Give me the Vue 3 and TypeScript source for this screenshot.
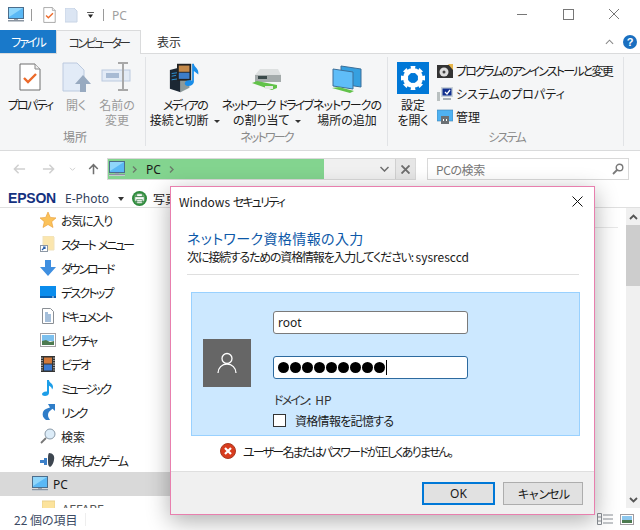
<script setup lang="ts">
interface NavItem {
  label: string;
  icon: string;
  tracking: number;
}

// kana runs narrower on the original font, so each label carries its own tracking
const navItems: NavItem[] = [
  { label: 'お気に入り', icon: 'i-star', tracking: -1.2 },
  { label: 'スタート メニュー', icon: 'i-startmenu', tracking: -2.2 },
  { label: 'ダウンロード', icon: 'i-download', tracking: -2.2 },
  { label: 'デスクトップ', icon: 'i-desktop', tracking: -1.8 },
  { label: 'ドキュメント', icon: 'i-document', tracking: -1.8 },
  { label: 'ピクチャ', icon: 'i-picture', tracking: -1.8 },
  { label: 'ビデオ', icon: 'i-video', tracking: -1.5 },
  { label: 'ミュージック', icon: 'i-music', tracking: -2.5 },
  { label: 'リンク', icon: 'i-link', tracking: -2 },
  { label: '検索', icon: 'i-search', tracking: 0 },
  { label: '保存したゲーム', icon: 'i-games', tracking: -2 },
];

const passwordDots = Array.from({ length: 9 }, (_, i) => i);
</script>

<template>
  <div class="explorer">
    <svg class="defs" aria-hidden="true">
      <symbol id="i-monitor" viewBox="0 0 16 16">
        <rect x="0.5" y="0.5" width="15" height="11" fill="#5ab8f5" stroke="#4b6d8c" />
        <path d="M1 1h14L1 10z" fill="#8fd6fb" />
        <rect x="0" y="13" width="16" height="1" fill="#8a94a0" />
        <rect x="0" y="14" width="16" height="1" fill="#c4cad0" />
        <rect x="6" y="12" width="4" height="1" fill="#9aa3ad" />
      </symbol>
      <symbol id="i-check" viewBox="0 0 22 28">
        <path d="M1 1h15l5 5v21H1z" fill="#fff" stroke="#6e6e6e" />
        <path d="M16 1v5h5" fill="#eee" stroke="#8a8a8a" />
        <path d="M5 15l4 4 8-8" fill="none" stroke="#ec6a2a" stroke-width="2.4" />
      </symbol>
      <symbol id="i-star" viewBox="0 0 16 16">
        <path d="M8 0l2.3 5.4 5.7.5-4.3 3.8 1.3 5.8L8 12.5l-5 3 1.3-5.8L0 5.9l5.7-.5z" fill="#fbc25a" stroke="#e89a32" stroke-width=".6" />
      </symbol>
      <symbol id="i-startmenu" viewBox="0 0 16 16">
        <path d="M3 0h10l1 1v13H3z" fill="#fbe6ae" stroke="#f0e2bd" />
        <rect x="0.5" y="9.5" width="7" height="6" fill="#fff" stroke="#8d98a5" />
        <path d="M2 14l3-3M3 11h2v2" stroke="#2a5fa8" fill="none" stroke-width="1.2" />
      </symbol>
      <symbol id="i-download" viewBox="0 0 16 16">
        <path d="M5 0h6v7h5l-8 9-8-9h5z" fill="#3f8fe0" />
      </symbol>
      <symbol id="i-desktop" viewBox="0 0 16 16">
        <rect x="0" y="2" width="16" height="12" fill="#0a8cec" />
        <rect x="0" y="12" width="16" height="2" fill="#0a5fb0" />
        <rect x="12" y="12.5" width="2" height="1" fill="#cfe6fa" />
      </symbol>
      <symbol id="i-document" viewBox="0 0 16 16">
        <path d="M2.500.5h8l3 3v12h-11z" fill="#fff" stroke="#8a8f95" />
        <path d="M5 5h3M5 7h6M5 9h6M5 11h6M5 13h6" stroke="#4a7fb5" />
      </symbol>
      <symbol id="i-picture" viewBox="0 0 16 16">
        <rect x="0.5" y="1.500" width="15" height="13" fill="#fff" stroke="#a3a0a4" />
        <rect x="2" y="3" width="12" height="6" fill="#7cc0ee" />
        <path d="M2 13V9l4-1 4 2 4-1v4z" fill="#4d7a50" />
      </symbol>
      <symbol id="i-video" viewBox="0 0 16 16">
        <rect x="1" y="0" width="14" height="16" fill="#333" />
        <path d="M2 1.500v13M14 1.500v13" stroke="#ddd" stroke-width="1.200" stroke-dasharray="1.200 1.200" />
        <rect x="4" y="1.500" width="8" height="6" fill="#d2793a" />
        <rect x="4" y="8.500" width="8" height="6" fill="#3a7ad2" />
      </symbol>
      <symbol id="i-music" viewBox="0 0 16 16">
        <path d="M7 0h2c0 3 4 3 4 7 0 1-.5 2-1 2.500 0-2-2-3.500-3-3.700V13c0 2-2 3-4 3s-3-1-3-2 2-3 5-2.500z" fill="#1d9ee8" />
      </symbol>
      <symbol id="i-link" viewBox="0 0 16 16">
        <path d="M8 0h7v7l-2.500-2.200C10 7 8 8 8 11c0 2 1 3.500 2 5H6c-3-2-4-5-3-8 .8-2 2.500-3.300 7-4.600z" fill="#2f7dc8" />
      </symbol>
      <symbol id="i-search" viewBox="0 0 16 16">
        <circle cx="10" cy="6" r="5" fill="#dcecf8" stroke="#8a9aa8" />
        <path d="M6 10l-5 5" stroke="#777" stroke-width="1.800" />
      </symbol>
      <symbol id="i-games" viewBox="0 0 16 16">
        <path d="M9 1c4 0 6 3 5 7-.5 3-2 6-4 7-2-1-2-3-2-7s0-6 1-7z" fill="#3d4650" />
        <path d="M0 8h4V6h3v7H4v-2H0z" fill="#3d80c8" />
      </symbol>
      <symbol id="i-folder" viewBox="0 0 13 16">
        <path d="M0 1h13v14H0z" fill="#fce39c" stroke="#e8cf8a" />
      </symbol>
    </svg>

    <header class="titlebar">
      <svg class="qa-monitor"><use href="#i-monitor" /></svg>
      <span class="qa-sep"></span>
      <svg class="qa-check"><use href="#i-check" /></svg>
      <svg class="qa-doc" viewBox="0 0 13 15">
        <path d="M0 0h9l3 3v11H0z" fill="#dbe5f3" stroke="#c8d4e5" />
      </svg>
      <svg class="qa-drop" viewBox="0 0 8 7">
        <path d="M0 0h8v1H0zM1 3h6L4 7z" fill="#222" />
      </svg>
      <span class="qa-sep last"></span>
      <span class="title-text">PC</span>
      <div class="win-controls">
        <svg viewBox="0 0 46 30"><path d="M18 14.500h10" stroke="#777" /></svg>
        <svg viewBox="0 0 46 30"><rect x="18.500" y="9.500" width="10" height="10" fill="none" stroke="#777" /></svg>
        <svg viewBox="0 0 46 30"><path d="M18 9l10 10M28 9L18 19" stroke="#777" /></svg>
      </div>
    </header>

    <nav class="tabs">
      <span class="tab file">ファイル</span>
      <span class="tab active">コンピューター</span>
      <span class="tab">表示</span>
      <div class="tabs-right">
        <svg class="collapse" viewBox="0 0 10 6"><path d="M1 5l4-4 4 4" fill="none" stroke="#888" stroke-width="1.200" /></svg>
        <span class="help">?</span>
      </div>
    </nav>

    <section class="ribbon">
      <div class="group g-place">
        <div class="group-body">
          <div class="rb-btn w-props">
            <svg class="rb-icon" viewBox="0 0 32 32"><use href="#i-check" x="5" y="1" width="22" height="28" /></svg>
            <span class="k2">プロパティ</span>
          </div>
          <div class="rb-btn w-open dim">
            <svg class="rb-icon" viewBox="0 0 32 32">
              <path d="M3 1h14l7 7v21H3z" fill="#e2ebf7" stroke="#bccadf" />
              <path d="M23 13l8 9h-5v8h-6v-8h-5z" fill="#98aac0" />
            </svg>
            <span>開く</span>
          </div>
          <div class="rb-btn w-rename dim">
            <svg class="rb-icon" viewBox="0 0 32 32">
              <rect x="1" y="8" width="28" height="11" fill="#e3ebf6" stroke="#bccadf" />
              <rect x="5" y="11" width="13" height="5" fill="#a8bbd4" />
              <path d="M17 1h10M22 1v27M17 28h10" stroke="#a8a8a8" stroke-width="2" fill="none" />
            </svg>
            <span>名前の<br />変更</span>
          </div>
        </div>
        <div class="group-label">場所</div>
      </div>

      <div class="group g-net">
        <div class="group-body">
          <div class="rb-btn w-media">
            <svg class="rb-icon" viewBox="0 0 36 32">
              <path d="M1 7l12-3v28L1 28z" fill="#1c2733" />
              <path d="M13 4l10 3v20l-10 5z" fill="#8c9a9a" />
              <path d="M3 11l7-1M3 14l5-1M3 18l7-1" stroke="#2f9be0" />
              <rect x="9" y="0" width="16" height="19" fill="#222" />
              <rect x="11" y="2" width="12" height="7" fill="#c58a4a" />
              <rect x="11" y="10" width="12" height="7" fill="#3d7dc8" />
              <path d="M26 0h2c0 4 6 5 5 12l-5-4v12c0 3-3 5-6 5s-5-2-4-4 4-3 8-2z" fill="#1a8de8" />
            </svg>
            <span><span class="k2">メディアの</span><br />接続と切断 <i class="caret"></i></span>
          </div>
          <div class="rb-btn w-drive">
            <svg class="rb-icon" viewBox="0 0 32 32">
              <path d="M4 13l5-6h18l3 6v7H4z" fill="#dde0e0" />
              <rect x="4" y="13" width="26" height="7" fill="#a4abab" />
              <rect x="7" y="14" width="9" height="3" fill="#3a4a4a" />
              <path d="M1 21l5-2 20 4v3l-5 2z" fill="#62c24a" />
              <path d="M14 24h8v3h-8z" fill="#e8e8e8" />
            </svg>
            <span><span class="k2">ネットワーク ドライブ</span><br />の割り当て <i class="caret"></i></span>
          </div>
          <div class="rb-btn w-place">
            <svg class="rb-icon" viewBox="0 0 32 32">
              <path d="M10 4l20 3v18l-20-3z" fill="#36a0e0" stroke="#3c6f99" />
              <path d="M2 7l20 3v17L2 24z" fill="#5fbdf8" stroke="#3c6f99" />
              <path d="M1 26l7-1 15 4-4 2z" fill="#62c24a" />
            </svg>
            <span><span class="k1">ネットワークの</span><br />場所の追加</span>
          </div>
        </div>
        <div class="group-label k2">ネットワーク</div>
      </div>

      <div class="group g-sys">
        <div class="group-body">
          <div class="rb-btn w-settings">
            <svg class="rb-icon" viewBox="0 0 32 32">
              <rect width="32" height="32" fill="#0078d7" />
              <circle cx="16" cy="16" r="7.500" fill="none" stroke="#fff" stroke-width="5" />
              <path d="M16 16L13.500 4h5zM16 16l-2.500 12h5zM16 16L4 13.500v5zM16 16l12-2.500v5zM16 16L6 9.500l3.500-3.500zM16 16l10 6.500-3.500 3.500zM16 16L22.500 6 26 9.500zM16 16L9.500 26 6 22.500z" fill="#fff" />
              <circle cx="16" cy="16" r="5" fill="#0078d7" />
            </svg>
            <span>設定<br />を開く</span>
          </div>
          <ul class="sys-list">
            <li>
              <svg viewBox="0 0 16 16">
                <rect y="2" width="16" height="13" fill="#333" />
                <path d="M11 1h5v6z" fill="#e8b64a" />
                <circle cx="7" cy="9" r="4.500" fill="#ddd" />
                <circle cx="7" cy="9" r="1.500" fill="#444" />
              </svg>
              <span class="k2">プログラムのアンインストールと変更</span>
            </li>
            <li>
              <svg viewBox="0 0 16 16">
                <rect x="0" y="6" width="3" height="9" fill="#b9c0c0" />
                <rect x="4" y="1" width="12" height="10" fill="#c9d2d8" />
                <rect x="5.500" y="2.500" width="9" height="7" fill="#12308f" />
                <path d="M8 6l2 2 3-4" fill="none" stroke="#fff" stroke-width="1.300" />
                <rect x="6" y="12" width="8" height="2" fill="#a8b0b8" />
              </svg>
              <span>システムのプロパティ</span>
            </li>
            <li>
              <svg viewBox="0 0 16 16">
                <rect y="1" width="16" height="11" fill="#4fb2f2" stroke="#3e7fb0" stroke-width=".6" />
                <rect x="4" y="7" width="8" height="8" fill="#6b7074" />
                <path d="M6 10h1v2H6zM9 10h1v2H9z" fill="#fff" />
              </svg>
              <span>管理</span>
            </li>
          </ul>
        </div>
        <div class="group-label k2">システム</div>
      </div>
    </section>

    <div class="address-row">
      <div class="arrows">
        <svg viewBox="0 0 14 12"><path d="M13 6H2M6 1.500L1.500 6 6 10.500" fill="none" stroke="#cfcfcf" stroke-width="1.600" /></svg>
        <svg viewBox="0 0 14 12"><path d="M1 6h11M8 1.500L12.500 6 8 10.500" fill="none" stroke="#cfcfcf" stroke-width="1.600" /></svg>
        <svg class="small" viewBox="0 0 8 6"><path d="M1 1l3 3 3-3" fill="none" stroke="#cfcfcf" stroke-width="1.200" /></svg>
        <svg viewBox="0 0 14 14"><path d="M7 13V2M2 7l5-5 5 5" fill="none" stroke="#707070" stroke-width="1.800" /></svg>
      </div>
      <div class="address">
        <div class="progress">
          <svg class="addr-monitor"><use href="#i-monitor" /></svg>
          <svg class="chev" viewBox="0 0 5 7"><path d="M1 .5L4 3.500 1 6.500" fill="none" stroke="#6b7b6b" stroke-width="1.400" /></svg>
          <span>PC</span>
          <svg class="chev" viewBox="0 0 5 7"><path d="M1 .5L4 3.500 1 6.500" fill="none" stroke="#6b7b6b" stroke-width="1.400" /></svg>
        </div>
        <div class="addr-rest">
          <svg viewBox="0 0 9 6"><path d="M.5 1l4 4 4-4" fill="none" stroke="#6d6d6d" stroke-width="1.500" /></svg>
        </div>
        <div class="addr-stop">
          <svg viewBox="0 0 9 9"><path d="M.5.5l8 8M8.500.5l-8 8" stroke="#6d6d6d" stroke-width="1.900" /></svg>
        </div>
      </div>
      <div class="search">
        <span>PCの検索</span>
        <svg viewBox="0 0 12 12"><circle cx="7.500" cy="4.500" r="3.300" fill="none" stroke="#7a7a7a" stroke-width="1.400" /><path d="M5 7l-4 4" stroke="#7a7a7a" stroke-width="1.800" /></svg>
      </div>
    </div>

    <div class="epson-bar">
      <span class="epson">EPSON</span>
      <span class="ephoto">E-Photo</span>
      <i class="caret big"></i>
      <svg class="print" viewBox="0 0 16 16">
        <circle cx="8" cy="8" r="8" fill="#2e8b3d" />
        <circle cx="8" cy="8" r="6" fill="#6db56f" />
        <path d="M5 3h6v3H5zM3 6h10v5H3zM5 9h6v4H5z" fill="#fff" stroke="#1f6e2e" stroke-width=".6" />
      </svg>
      <span class="photo-label">写真</span>
    </div>

    <main class="content">
      <aside class="nav">
        <div v-for="item in navItems" :key="item.label" class="nav-row">
          <svg class="nav-icon"><use :href="'#' + item.icon" /></svg>
          <span :style="{ letterSpacing: item.tracking + 'px' }">{{ item.label }}</span>
        </div>
        <div class="nav-row pc">
          <svg class="nav-icon"><use href="#i-monitor" /></svg>
          <span>PC</span>
        </div>
        <div class="nav-row cut">
          <svg class="nav-folder"><use href="#i-folder" /></svg>
          <span>AFFARE</span>
        </div>
      </aside>
      <div class="file-area">
        <div class="rule"></div>
      </div>
      <div class="scrollbar">
        <svg viewBox="0 0 9 6"><path d="M1 5l3.500-3.500L8 5" fill="none" stroke="#555" stroke-width="1.800" /></svg>
        <div class="thumb"></div>
        <div class="track"></div>
        <svg viewBox="0 0 9 6"><path d="M1 1l3.500 3.500L8 1" fill="none" stroke="#555" stroke-width="1.800" /></svg>
      </div>
    </main>

    <footer class="statusbar">
      <span class="count">22 個の項目</span>
      <span class="status-sep"></span>
      <div class="view-icons">
        <svg viewBox="0 0 16 12"><path d="M.5.5h4v11h-4zM.5 4h4M.5 8h4M6 2h10M6 6h10M6 10h10" fill="none" stroke="#8a8f95" /></svg>
        <svg viewBox="0 0 14 11">
          <rect x=".5" y=".5" width="13" height="10" fill="#fff" stroke="#a09ca0" />
          <rect x="2" y="2" width="10" height="4" fill="#8cc7ee" />
          <rect x="2" y="6" width="10" height="3" fill="#4d7a50" />
        </svg>
      </div>
    </footer>

    <div class="dialog">
      <div class="dlg-title">
        <span>Windows <span class="k2">セキュリティ</span></span>
        <svg viewBox="0 0 11 11"><path d="M.5.5l10 10M10.500.5l-10 10" stroke="#111" /></svg>
      </div>
      <div class="dlg-body">
        <h1>ネットワーク資格情報の入力</h1>
        <p class="dlg-sub"><span class="k12">次に接続するための資格情報を入力してください:</span> sysresccd</p>
        <div class="dlg-rule"></div>
        <div class="cred">
          <div class="avatar">
            <svg viewBox="0 0 20 22">
              <circle cx="10" cy="6.500" r="5" fill="none" stroke="#fff" stroke-width="1.300" />
              <path d="M1 21c0-5 4-9 9-9s9 4 9 9" fill="none" stroke="#fff" stroke-width="1.300" />
            </svg>
          </div>
          <div class="fields">
            <div class="field user">root</div>
            <div class="field pass">
              <i v-for="n in passwordDots" :key="n" class="dot"></i>
              <i class="cursor"></i>
            </div>
            <div class="domain"><span class="k2">ドメイン:</span> HP</div>
            <label class="remember">
              <i class="box"></i>
              <span class="k05">資格情報を記憶する</span>
            </label>
          </div>
        </div>
        <div class="error">
          <svg viewBox="0 0 16 16">
            <circle cx="8" cy="8" r="7.500" fill="#d83c1e" stroke="#a83a22" />
            <path d="M5 5l6 6M11 5l-6 6" stroke="#fff" stroke-width="2.200" />
          </svg>
          <span class="k2">ユーザー名またはパスワードが正しくありません。</span>
        </div>
      </div>
      <div class="dlg-footer">
        <button class="btn ok">OK</button>
        <button class="btn k2">キャンセル</button>
      </div>
    </div>
  </div>
</template>

<style>
html,
body {
  margin: 0;
  background: #fff;
}
</style>

<style scoped>
.explorer {
  position: relative;
  width: 640px;
  height: 530px;
  overflow: hidden;
  display: flex;
  flex-direction: column;
  background: #fff;
  color: #1a1a1a;
  font-family: "Noto Sans CJK JP", "Noto Sans", sans-serif;
  font-size: 12px;
  line-height: 15px;
  font-feature-settings: "palt";
  word-spacing: 3px;
}
.k05 {
  letter-spacing: -0.7px;
}
.k1 {
  letter-spacing: -1px;
}
.k12 {
  letter-spacing: -1.2px;
}
.k2 {
  letter-spacing: -1.8px;
}
.defs {
  position: absolute;
  width: 0;
  height: 0;
}
.titlebar {
  height: 30px;
  flex: none;
  display: flex;
  align-items: center;
  padding-left: 8px;
}
.qa-monitor {
  width: 16px;
  height: 16px;
}
.qa-sep {
  width: 1px;
  height: 12px;
  background: #9a9a9a;
  margin: 0 11px 0 7px;
}
.qa-sep.last {
  margin: 0 8px 0 9px;
}
.qa-check {
  width: 13px;
  height: 16px;
}
.qa-doc {
  width: 13px;
  height: 15px;
  margin-left: 9px;
}
.qa-drop {
  width: 7px;
  height: 6px;
  margin-left: 9px;
}
.title-text {
  color: #a0a0a0;
  font-family: "Noto Sans", sans-serif;
  font-size: 12px;
}
.win-controls {
  margin-left: auto;
  display: flex;
  margin-right: 3px;
}
.win-controls svg {
  width: 46px;
  height: 30px;
}
.tabs {
  height: 24px;
  flex: none;
  display: flex;
  align-items: stretch;
  position: relative;
  border-bottom: 1px solid #dadbdc;
  box-sizing: border-box;
}
.tab {
  display: flex;
  align-items: center;
  justify-content: center;
  width: 56px;
  color: #333;
  white-space: nowrap;
}
.tab.file {
  background: #1979ca;
  color: #fff;
  letter-spacing: -2px;
}
.tab.active {
  width: 85px;
  height: 24px;
  box-sizing: border-box;
  background: #f5f6f7;
  border: 1px solid #dadbdc;
  border-bottom: none;
  letter-spacing: -2.5px;
}
.tabs-right {
  margin-left: auto;
  display: flex;
  align-items: center;
  gap: 9px;
  padding-right: 3px;
}
.collapse {
  width: 9px;
  height: 6px;
}
.help {
  width: 14px;
  height: 14px;
  border-radius: 50%;
  background: #1a6fc0;
  color: #fff;
  font-family: "Liberation Sans", sans-serif;
  font-size: 11px;
  font-weight: 700;
  line-height: 14px;
  text-align: center;
}
.ribbon {
  height: 97px;
  flex: none;
  display: flex;
  background: #f5f6f7;
  border-bottom: 1px solid #dadbdc;
  box-sizing: border-box;
  padding-bottom: 4px;
}
.group {
  display: flex;
  flex-direction: column;
  box-sizing: border-box;
  margin-top: 3px;
  border-right: 1px solid #e1e3e6;
}
.g-place {
  width: 146px;
  padding-left: 5px;
}
.g-net {
  width: 242px;
}
.g-sys {
  width: 236px;
  padding-left: 2px;
}
.group-body {
  flex: 1;
  display: flex;
}
.group-label {
  height: 18px;
  line-height: 18px;
  text-align: center;
  color: #8a8a8a;
}
.rb-btn {
  display: flex;
  flex-direction: column;
  align-items: center;
  flex: none;
  text-align: center;
  padding-top: 5px;
  white-space: nowrap;
}
.rb-btn.dim {
  color: #9a9a9a;
}
.rb-icon {
  width: 32px;
  height: 32px;
  margin-bottom: 3px;
  flex: none;
}
.w-props {
  width: 50px;
}
.w-open {
  width: 42px;
}
.w-rename {
  width: 40px;
}
.w-media {
  width: 78px;
}
.w-drive {
  width: 86px;
}
.w-place {
  width: 74px;
}
.w-settings {
  width: 46px;
}
.caret {
  display: inline-block;
  width: 0;
  height: 0;
  border: 3px solid transparent;
  border-top: 3px solid #333;
  border-bottom: none;
  vertical-align: 2px;
}
.sys-list {
  list-style: none;
  margin: 0 0 0 1px;
  padding: 6px 0 0;
  display: flex;
  flex-direction: column;
  gap: 8px;
}
.sys-list li {
  display: flex;
  align-items: center;
  gap: 3px;
  height: 15px;
  white-space: nowrap;
}
.sys-list svg {
  width: 16px;
  height: 16px;
  flex: none;
}
.address-row {
  height: 39px;
  flex: none;
  display: flex;
  align-items: center;
  box-sizing: border-box;
  padding: 0 11px 3px 13px;
}
.arrows {
  width: 94px;
  flex: none;
  display: flex;
  align-items: center;
  gap: 16px;
}
.arrows svg {
  width: 13px;
  height: 12px;
}
.arrows svg.small {
  width: 7px;
  height: 5px;
  margin: 0 -5px 0 -2px;
}
.address {
  width: 309px;
  height: 22px;
  flex: none;
  display: flex;
  box-sizing: border-box;
  border: 1px solid #d9d9d9;
  background: #f0f0f0;
}
.progress {
  width: 216px;
  flex: none;
  display: flex;
  align-items: center;
  background: #83d48f;
  color: #1a1a1a;
}
.progress span {
  font-family: "Noto Sans", sans-serif;
  margin: 0 8px 0 9px;
}
.addr-monitor {
  width: 16px;
  height: 16px;
  margin: 0 7px 0 1px;
}
.chev {
  width: 5px;
  height: 7px;
}
.addr-rest {
  flex: 1;
  display: flex;
  align-items: center;
  justify-content: flex-end;
  padding-right: 6px;
}
.addr-rest svg {
  width: 9px;
  height: 6px;
}
.addr-stop {
  width: 19px;
  flex: none;
  display: flex;
  align-items: center;
  justify-content: center;
  background: #e6e6e6;
  border-left: 1px solid #d0d0d0;
}
.addr-stop svg {
  width: 9px;
  height: 9px;
}
.search {
  width: 202px;
  height: 22px;
  margin-left: auto;
  box-sizing: border-box;
  border: 1px solid #d9d9d9;
  display: flex;
  align-items: center;
  justify-content: space-between;
  padding: 0 4px 0 8px;
  color: #777;
  letter-spacing: -0.4px;
}
.search svg {
  width: 12px;
  height: 12px;
}
.epson-bar {
  height: 18px;
  flex: none;
  display: flex;
  align-items: center;
  padding-left: 8px;
  box-sizing: border-box;
  border-bottom: 1px solid #e0e0e0;
}
.epson {
  color: #14317f;
  font-family: "Liberation Sans", sans-serif;
  font-size: 14px;
  font-weight: 700;
  letter-spacing: -0.2px;
}
.ephoto {
  margin-left: 9px;
  font-family: "Noto Sans", sans-serif;
  font-size: 12px;
  color: #33415c;
}
.caret.big {
  border-width: 4px 3.5px 0;
  margin-left: 9px;
}
.print {
  width: 15px;
  height: 15px;
  margin-left: 8px;
}
.photo-label {
  margin-left: 6px;
}
.content {
  flex: 1;
  min-height: 0;
  display: flex;
}
.nav {
  width: 170px;
  flex: none;
  overflow: hidden;
}
.nav-row {
  height: 24px;
  display: flex;
  align-items: center;
  padding-left: 40px;
  gap: 5px;
  white-space: nowrap;
}
.nav-icon {
  width: 16px;
  height: 16px;
  flex: none;
}
.nav-folder {
  width: 13px;
  height: 16px;
  flex: none;
}
.nav-row.pc {
  background: #d9d9d9;
  padding-left: 32px;
}
.nav-row.pc span {
  font-family: "Noto Sans", sans-serif;
}
.nav-row.cut {
  padding-left: 42px;
  gap: 7px;
  color: #555;
}
.file-area {
  flex: 1;
}
.rule {
  margin-top: 19px;
  height: 1px;
  background: #e8e8e8;
  width: 448px;
}
.scrollbar {
  width: 14px;
  flex: none;
  display: flex;
  flex-direction: column;
  align-items: center;
  background: #f0f0f0;
}
.scrollbar svg {
  width: 9px;
  height: 6px;
  margin: 6px 0 5px;
  flex: none;
}
.thumb {
  width: 100%;
  height: 61px;
  background: #cdcdcd;
}
.track {
  flex: 1;
}
.statusbar {
  height: 22px;
  flex: none;
  display: flex;
  align-items: center;
  padding-left: 14px;
  background: #fff;
}
.count {
  color: #3b4a63;
  width: 71px;
  word-spacing: 0;
}
.status-sep {
  width: 1px;
  height: 13px;
  background: #eee;
}
.view-icons {
  margin-left: auto;
  display: flex;
  align-items: center;
  gap: 7px;
  padding-right: 6px;
}
.view-icons svg:first-child {
  width: 16px;
  height: 12px;
}
.view-icons svg:last-child {
  width: 14px;
  height: 11px;
}
.dialog {
  position: absolute;
  left: 170px;
  top: 186px;
  width: 425px;
  height: 329px;
  box-sizing: border-box;
  display: flex;
  flex-direction: column;
  background: #fff;
  border: 1px solid #e87fae;
  box-shadow: 0 6px 22px rgba(0, 0, 0, 0.32);
}
.dlg-title {
  height: 29px;
  flex: none;
  display: flex;
  align-items: center;
  justify-content: space-between;
  padding: 0 11px 0 8px;
  font-size: 12px;
  word-spacing: 0;
}
.dlg-title svg {
  width: 11px;
  height: 11px;
}
.dlg-body {
  flex: 1;
  padding: 13px 15px 0 16px;
}
h1 {
  margin: 0;
  font-size: 14px;
  font-weight: 400;
  line-height: 18px;
  color: #0c58a8;
  letter-spacing: 0.4px;
}
.dlg-sub {
  margin: 2px 0 0;
  white-space: nowrap;
  line-height: 16px;
  word-spacing: 0;
}
.dlg-rule {
  height: 1px;
  background: #dfdfdf;
  margin-top: 9px;
}
.cred {
  margin: 17px -1px 0 4px;
  height: 144px;
  box-sizing: border-box;
  display: flex;
  background: #cce8ff;
  border: 1px solid #99d1ff;
}
.avatar {
  width: 48px;
  height: 48px;
  margin: 46px 22px 0 11px;
  flex: none;
  display: flex;
  align-items: center;
  justify-content: center;
  background: #666;
}
.avatar svg {
  width: 20px;
  height: 22px;
}
.fields {
  width: 195px;
  padding-top: 18px;
}
.field {
  height: 23px;
  box-sizing: border-box;
  background: #fff;
  border: 1px solid #7a7a7a;
  border-radius: 3px;
  display: flex;
  align-items: center;
  padding-left: 4px;
  font-family: "Noto Sans", sans-serif;
}
.field.pass {
  margin-top: 22px;
  border-color: #2d6a9f;
  gap: 1px;
}
.dot {
  width: 11px;
  height: 11px;
  border-radius: 50%;
  background: #000;
}
.cursor {
  width: 1px;
  height: 15px;
  background: #000;
}
.domain {
  margin-top: 13px;
  padding-left: 1px;
  color: #333;
}
.remember {
  display: flex;
  align-items: center;
  gap: 9px;
  margin-top: 6px;
}
.box {
  width: 13px;
  height: 13px;
  box-sizing: border-box;
  background: #fff;
  border: 1px solid #333;
}
.error {
  display: flex;
  align-items: center;
  gap: 7px;
  margin: 7px 0 0 33px;
  white-space: nowrap;
}
.error svg {
  width: 16px;
  height: 16px;
  flex: none;
}
.dlg-footer {
  height: 43px;
  flex: none;
  box-sizing: border-box;
  display: flex;
  align-items: center;
  justify-content: flex-end;
  gap: 8px;
  padding: 0 11px 0 0;
  background: #f0f0f0;
  border-top: 1px solid #dfdfdf;
}
.btn {
  width: 80px;
  height: 23px;
  box-sizing: border-box;
  background: #e1e1e1;
  border: 1px solid #adadad;
  font-family: inherit;
  font-size: 12px;
  color: #1a1a1a;
  padding: 0;
}
.btn.ok {
  width: 73px;
  border: 2px solid #0078d7;
  font-family: "Noto Sans", sans-serif;
}
</style>
